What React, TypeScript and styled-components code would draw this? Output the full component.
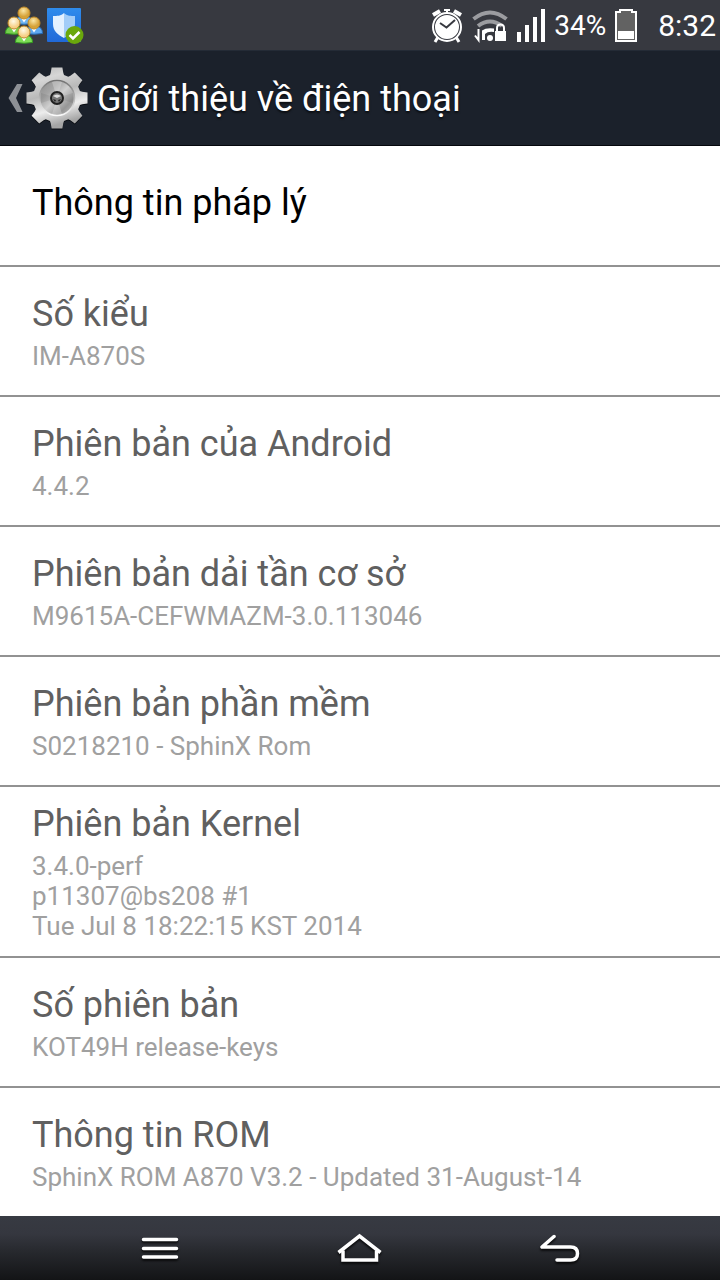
import React from 'react';
import styled, { createGlobalStyle } from 'styled-components';

const GlobalStyle = createGlobalStyle`
  *, *::before, *::after { box-sizing: border-box; }
  body {
    margin: 0;
    background: #fff;
    font-family: Roboto, "Noto Sans", sans-serif;
  }
`;

const Screen = styled.div`
  display: flex;
  flex-direction: column;
  min-height: 100vh;
`;

const StatusBar = styled.div`
  display: flex;
  justify-content: space-between;
  height: 51px;
  padding: 0 4px;
  background: #373940;
  border-bottom: 1px solid #242b36;
  color: #fff;
`;

const StatusGroup = styled.div<{ $gap: number }>`
  display: flex;
  align-items: center;
  gap: ${(p) => p.$gap}px;
`;

const StatusText = styled.span<{ $size: number }>`
  font-size: ${(p) => p.$size}px;
  line-height: 36px;
  padding-top: 2px;
`;

const Clock = styled(StatusText)`
  margin-left: 12px;
`;

const Glyph = styled.svg`
  display: block;
  flex: none;
  overflow: visible;
`;

const Header = styled.header`
  display: flex;
  height: 95px;
  background: #1b212b;
  border-bottom: 1px solid #05070d;
`;

const BackButton = styled.button`
  display: flex;
  align-items: center;
  gap: 2px;
  padding: 0 0 0 8px;
  border: 0;
  background: none;
`;

const Title = styled.h1`
  margin: 0;
  padding-left: 8px;
  font-size: 36px;
  font-weight: 400;
  line-height: 96px;
  color: #fff;
  text-shadow: 0 2px 2px rgba(0, 0, 0, 0.6);
`;

const List = styled.ul`
  flex: 1;
  margin: 0;
  padding: 0;
  list-style: none;
`;

const Row = styled.li`
  display: flex;
  flex-direction: column;
  justify-content: center;
  gap: 3px;
  min-height: 130px;
  padding: 13px 32px 15px;
  border-bottom: 2px solid #929292;

  &:first-child { min-height: 121px; padding-bottom: 18px; }
  &:last-child { min-height: 128px; border-bottom: 0; }
`;

const RowTitle = styled.span<{ $enabled?: boolean }>`
  font-size: 36px;
  line-height: 48px;
  color: ${(p) => (p.$enabled ? '#000' : '#606060')};
`;

const Summary = styled.span`
  font-size: 26px;
  line-height: 30px;
  color: #a0a0a0;
  white-space: pre-line;
`;

const NavBar = styled.nav`
  display: grid;
  grid-template-columns: 1fr 200px 200px 200px 1fr;
  height: 64px;
  background: linear-gradient(#373a42 0%, #35373f 28%, #27292e 55%, #131416 100%);
`;

const NavButton = styled.button`
  display: flex;
  align-items: center;
  justify-content: center;
  padding: 0;
  border: 0;
  background: none;

  &:first-child { grid-column: 2; }

  svg { filter: drop-shadow(0 2px 1px rgba(0, 0, 0, 0.8)); }
`;

function gearPath(cx: number, cy: number): string {
  const profile: [number, number][] = [
    [24, -17],
    [26, -14],
    [31, -10],
    [31, 10],
    [26, 14],
    [24, 17],
  ];
  const points: string[] = [];
  for (let tooth = 0; tooth < 8; tooth += 1) {
    profile.forEach(([radius, offset]) => {
      const angle = ((tooth * 45 + offset - 90) * Math.PI) / 180;
      points.push(`${(cx + radius * Math.cos(angle)).toFixed(2)} ${(cy + radius * Math.sin(angle)).toFixed(2)}`);
    });
  }
  return `M${points.join('L')}Z`;
}

interface PersonProps {
  x: number;
  y: number;
  body: string;
  edge: string;
  face: string;
}

const Person = ({ x, y, body, edge, face }: PersonProps) => (
  <g transform={`translate(${x} ${y})`}>
    <path d="M-8.500 10.500Q-8.500 4-3 3.500H3Q8.500 4 8.500 10.500Q0 12-8.500 10.500Z" fill={body} stroke={edge} />
    <path d="M-3 5L0 9.500L3 5Z" fill="#fff" />
    <circle r="6" fill={`url(#${face})`} stroke="#c08a28" />
  </g>
);

const PeopleIcon = () => (
  <Glyph width="40" height="38" viewBox="0 0 40 38" aria-hidden="true">
    <defs>
      <radialGradient id="pale" cx="45%" cy="35%">
        <stop offset="0" stopColor="#fffbe8" />
        <stop offset="1" stopColor="#f6cf86" />
      </radialGradient>
      <radialGradient id="gold" cx="45%" cy="30%">
        <stop offset="0" stopColor="#fbe6a4" />
        <stop offset="1" stopColor="#d6a238" />
      </radialGradient>
    </defs>
    <Person x={20} y={7} body="#6fb4f2" edge="#2a74bd" face="gold" />
    <Person x={10} y={17} body="#74cf4e" edge="#359a20" face="pale" />
    <Person x={30} y={17} body="#5ea8f0" edge="#2468b4" face="gold" />
    <Person x={20} y={26} body="#7ddc55" edge="#339a20" face="pale" />
  </Glyph>
);

const ShieldIcon = () => (
  <Glyph width="38" height="38" viewBox="0 0 38 38" aria-hidden="true">
    <defs>
      <linearGradient id="tile" x2="0" y2="1">
        <stop stopColor="#2f8cec" />
        <stop offset="1" stopColor="#2169d8" />
      </linearGradient>
    </defs>
    <rect y="2" width="34" height="34" rx="1" fill="url(#tile)" />
    <path d="M17 7C14 10 10 10 6 10V18C6 25 11 29 17 32Z" fill="#e4f1ff" />
    <path d="M17 7C20 10 24 10 28 10V18C28 25 23 29 17 32Z" fill="#a3cdf8" />
    <circle cx="27.500" cy="29" r="9" fill="#6aa80c" />
    <path d="M22.500 29L26 32.500L32.500 26" fill="none" stroke="#fff" strokeWidth="2.500" />
  </Glyph>
);

const AlarmIcon = () => (
  <Glyph width="32" height="36" viewBox="0 0 32 36" aria-label="Báo thức" role="img">
    <g stroke="#fff" fill="none" strokeWidth="2">
      <path d="M2 8L9 4M23 4L30 8" strokeWidth="4" />
      <path d="M7 30L4 35M25 30L28 35" strokeWidth="3" />
      <path d="M16 3V6M13 3H19" />
      <circle cx="16" cy="20" r="14" />
      <circle cx="16" cy="20" r="11" fill="#fff" />
      <path d="M9 16L15.500 20.500L24 13" stroke="#373940" />
    </g>
  </Glyph>
);

const WifiIcon = () => (
  <Glyph width="36" height="32" viewBox="0 0 36 32" aria-label="Wi-Fi" role="img">
    <path d="M1.500 10Q18-3 34.500 10" fill="none" stroke="#9b9ca0" strokeWidth="4" />
    <path d="M6 17Q18 8 30 17" fill="none" stroke="#9b9ca0" strokeWidth="4" />
    <circle cx="18" cy="29" r="3" fill="#fff" />
    <path d="M3 26.500L6.500 31V20" fill="none" stroke="#fff" strokeWidth="2" />
    <path d="M10 31V21.500Q14 18.500 22 19.500V23Q16 22 13 25V31Z" fill="#fff" />
    <rect x="23" y="22" width="11" height="10" fill="#fff" />
    <path d="M25 23V19Q25 15.500 28.500 15.500T32 19V23" fill="none" stroke="#fff" strokeWidth="2" />
  </Glyph>
);

const SignalIcon = () => (
  <Glyph width="28" height="33" viewBox="0 0 28 33" aria-label="Tín hiệu" role="img">
    <path d="M0 23H4V33H0ZM8 16H12V33H8ZM16 8H20V33H16ZM24 0H28V33H24Z" fill="#fff" />
  </Glyph>
);

const BatteryIcon = () => (
  <Glyph width="22" height="33" viewBox="0 0 22 33" aria-label="Pin" role="img">
    <path d="M1 3H5V1H17V3H21V32H1Z" fill="#626262" stroke="#fff" strokeWidth="2" />
    <path d="M3 22H19V30H3Z" fill="#fff" />
  </Glyph>
);

const ChevronIcon = () => (
  <Glyph width="15" height="28" viewBox="0 0 15 28" aria-hidden="true">
    <path d="M9 0H14.500L8 14L14.500 28H9L0.500 14Z" fill="#8d9095" />
  </Glyph>
);

const GearIcon = () => (
  <Glyph width="64" height="64" viewBox="0 0 64 64" aria-hidden="true">
    <defs>
      <linearGradient id="metal" x2="0.3" y2="1">
        <stop stopColor="#b5b5b5" />
        <stop offset="0.25" stopColor="#d6d6d6" />
        <stop offset="0.5" stopColor="#b9b9b9" />
        <stop offset="0.75" stopColor="#ededed" />
        <stop offset="1" stopColor="#a5a5a5" />
      </linearGradient>
      <linearGradient id="dish" x2="1" y2="1">
        <stop stopColor="#8a8a8a" />
        <stop offset="0.3" stopColor="#a5a5a5" />
        <stop offset="0.5" stopColor="#cfcfcf" />
        <stop offset="0.75" stopColor="#969696" />
        <stop offset="1" stopColor="#c4c4c4" />
      </linearGradient>
      <linearGradient id="rim" x2="0" y2="1">
        <stop stopColor="#727272" />
        <stop offset="1" stopColor="#fafafa" />
      </linearGradient>
    </defs>
    <path d={gearPath(32, 33)} fill="#0a0d12" />
    <path d={gearPath(32, 32)} fill="url(#metal)" />
    <circle cx="32" cy="32" r="17.500" fill="url(#dish)" stroke="url(#rim)" strokeWidth="1.500" />
    <path d="M32 32L27 16Q32 14 37 16ZM32 32L27 48Q32 50 37 48Z" fill="#e6e6e6" opacity="0.35" />
    <path d="M32 32L16 27V37ZM32 32L48 27V37Z" fill="#555" opacity="0.15" />
    <circle cx="32" cy="32" r="6" fill="#777" stroke="#202020" strokeWidth="2" />
    <path d="M28 30Q32 27 36 30L32 32Z" fill="#ddd" />
    <path d="M28 33L31 34L30 36ZM36 33L33 34L34 36Z" fill="#222" />
  </Glyph>
);

const MenuIcon = () => (
  <Glyph width="36" height="22" viewBox="0 0 36 22" aria-hidden="true">
    <path d="M1.500 2.500H34.500M1.500 11.500H34.500M1.500 20H34.500" stroke="#fff" strokeWidth="3.500" strokeLinecap="round" />
  </Glyph>
);

const HomeIcon = () => (
  <Glyph width="46" height="30" viewBox="0 0 46 30" aria-hidden="true">
    <path d="M1.500 19.500L22.500 3L43.500 19.500" fill="none" stroke="#fff" strokeWidth="3.500" />
    <path d="M6 17.500V27H39.500V17.500" fill="none" stroke="#fff" strokeWidth="3.500" />
  </Glyph>
);

const ReturnIcon = () => (
  <Glyph width="40" height="28" viewBox="0 0 40 28" aria-hidden="true">
    <path d="M14 2.500L2 13H30.500Q37.500 13 37.500 19.500T30.500 26H17" fill="none" stroke="#fff" strokeWidth="3.500" strokeLinecap="round" strokeLinejoin="round" />
  </Glyph>
);

interface Item {
  title: string;
  summary?: string;
}

const items: Item[] = [
  { title: 'Thông tin pháp lý' },
  { title: 'Số kiểu', summary: 'IM-A870S' },
  { title: 'Phiên bản của Android', summary: '4.4.2' },
  { title: 'Phiên bản dải tần cơ sở', summary: 'M9615A-CEFWMAZM-3.0.113046' },
  { title: 'Phiên bản phần mềm', summary: 'S0218210 - SphinX Rom' },
  { title: 'Phiên bản Kernel', summary: '3.4.0-perf\np11307@bs208 #1\nTue Jul 8 18:22:15 KST 2014' },
  { title: 'Số phiên bản', summary: 'KOT49H release-keys' },
  { title: 'Thông tin ROM', summary: 'SphinX ROM A870 V3.2 - Updated 31-August-14' },
];

export default function App() {
  return (
    <Screen>
      <GlobalStyle />
      <StatusBar>
        <StatusGroup $gap={3}>
          <PeopleIcon />
          <ShieldIcon />
        </StatusGroup>
        <StatusGroup $gap={9}>
          <AlarmIcon />
          <WifiIcon />
          <SignalIcon />
          <StatusText $size={28}>34%</StatusText>
          <BatteryIcon />
          <Clock $size={30}>8:32</Clock>
        </StatusGroup>
      </StatusBar>
      <Header>
        <BackButton aria-label="Quay lại">
          <ChevronIcon />
          <GearIcon />
        </BackButton>
        <Title>Giới thiệu về điện thoại</Title>
      </Header>
      <List>
        {items.map((item) => (
          <Row key={item.title}>
            <RowTitle $enabled={!item.summary}>{item.title}</RowTitle>
            {item.summary && <Summary>{item.summary}</Summary>}
          </Row>
        ))}
      </List>
      <NavBar>
        <NavButton aria-label="Menu"><MenuIcon /></NavButton>
        <NavButton aria-label="Trang chủ"><HomeIcon /></NavButton>
        <NavButton aria-label="Trở lại"><ReturnIcon /></NavButton>
      </NavBar>
    </Screen>
  );
}
